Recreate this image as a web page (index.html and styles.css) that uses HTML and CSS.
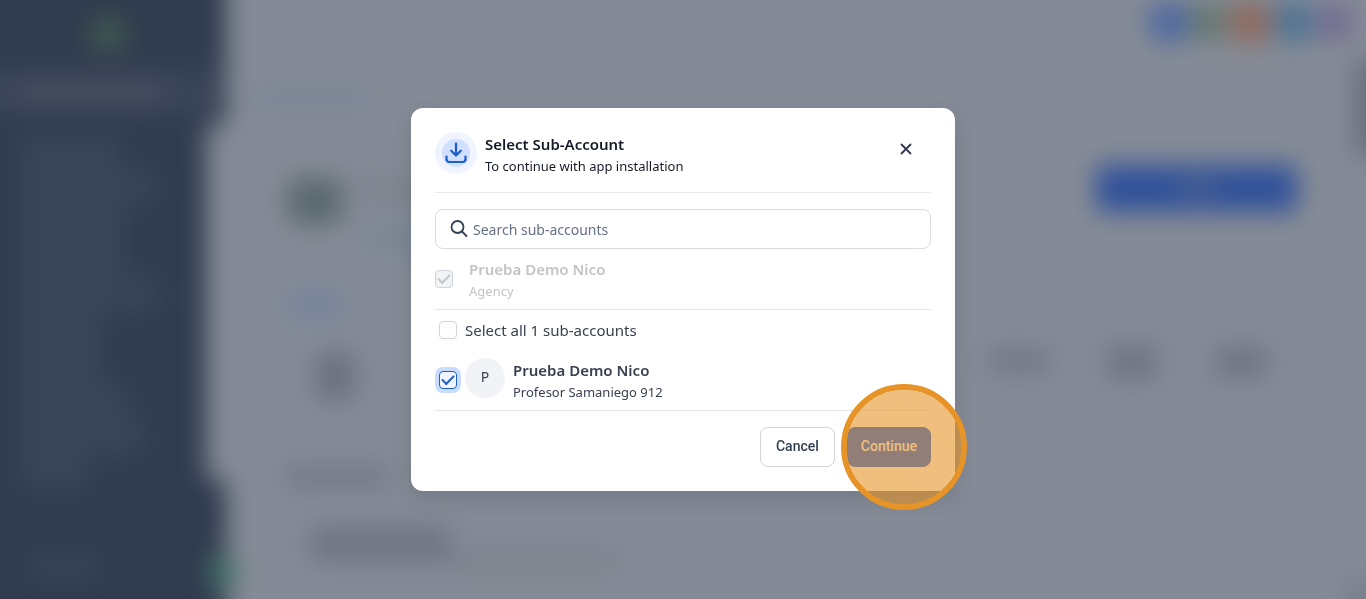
FILE: index.html
```html
<!DOCTYPE html>
<html lang="en">
<head>
<meta charset="utf-8">
<meta name="viewport" content="width=device-width, initial-scale=1">
<title>Select Sub-Account</title>
<link rel="stylesheet" href="styles.css">
</head>
<body>
<svg class="backdrop" viewBox="0 0 1366 599" preserveAspectRatio="none" aria-hidden="true">
  <defs>
    <filter id="soft" x="-60" y="-60" width="1500" height="720" filterUnits="userSpaceOnUse" color-interpolation-filters="sRGB"><feGaussianBlur stdDeviation="13"/></filter>
  </defs>
  <rect width="1366" height="599" fill="#858b96"/>
  <g filter="url(#soft)">
    <rect x="-60" y="-60" width="1500" height="720" fill="#858b96"/>
    <path d="M-60-60H226V125H206V480H226V660H-60Z" fill="#303b4e"/>
    <rect x="-60" y="70" width="282" height="44" fill="#3b4558"/>
    <rect x="18" y="82" width="145" height="20" fill="#494f61"/>
    <circle cx="108" cy="34" r="20" fill="#3f5650"/>
    <g fill="#3a4558">
      <rect x="20" y="134" width="100" height="34"/>
      <rect x="20" y="168" width="135" height="36"/>
      <rect x="20" y="204" width="105" height="72"/>
      <rect x="20" y="276" width="140" height="36"/>
      <rect x="20" y="312" width="82" height="72"/>
      <rect x="20" y="384" width="110" height="36"/>
      <rect x="20" y="420" width="125" height="36"/>
      <rect x="20" y="456" width="70" height="34"/>
      <rect x="30" y="554" width="68" height="24"/>
    </g>
    <circle cx="222" cy="572" r="16" fill="#417066"/>
    <rect x="255" y="88" width="115" height="20" fill="#7a8497"/>
    <rect x="288" y="178" width="54" height="46" fill="#5a686f"/>
    <rect x="355" y="180" width="120" height="20" fill="#7c818c"/>
    <rect x="365" y="225" width="100" height="28" fill="#788693"/>
    <rect x="285" y="288" width="60" height="34" fill="#78849b"/>
    <rect x="316" y="352" width="38" height="48" fill="#6b707c"/>
    <rect x="285" y="466" width="105" height="22" fill="#747985"/>
    <rect x="310" y="526" width="140" height="36" fill="#6e7481"/>
    <rect x="450" y="552" width="170" height="18" fill="#7b818b"/>
    <circle cx="1169" cy="22" r="22" fill="#5069a0"/>
    <circle cx="1208" cy="22" r="19" fill="#62766f"/>
    <circle cx="1250" cy="22" r="22" fill="#8f6a5e"/>
    <circle cx="1294" cy="22" r="22" fill="#507494"/>
    <circle cx="1335" cy="22" r="19" fill="#746b91"/>
    <rect x="1096" y="165" width="201" height="47" rx="5" fill="#305199"/>
    <rect x="1180" y="180" width="36" height="16" fill="#4a608f"/>
    <rect x="1355" y="60" width="40" height="95" fill="#696f7a"/>
    <rect x="988" y="348" width="62" height="26" fill="#737886"/>
    <rect x="1106" y="344" width="52" height="36" fill="#6f7583"/>
    <rect x="1214" y="346" width="54" height="32" fill="#6f7583"/>
    <circle cx="1366" cy="599" r="24" fill="#7a808b"/>
  </g>
</svg>
<main class="overlay">
  <form class="modal" role="dialog" aria-labelledby="title" aria-describedby="subtitle">
    <header class="modal-header">
      <span class="badge">
        <svg width="24" height="24" viewBox="0 0 24 24" fill="none" stroke="#1d5bcc" stroke-width="2.200" stroke-linecap="round" stroke-linejoin="round" aria-hidden="true"><path d="M12 2.500v12M7.200 9.700l4.800 4.800 4.800-4.800M2.500 15.500V18a3 3 0 0 0 3 3h13a3 3 0 0 0 3-3v-2.500"/></svg>
      </span>
      <div class="text">
        <h1 class="name title" id="title">Select Sub-Account</h1>
        <p class="detail title" id="subtitle">To continue with app installation</p>
      </div>
      <button class="close" type="button" aria-label="Close">
        <svg width="12" height="12" viewBox="0 0 12 12" fill="none" stroke="#30374a" stroke-width="1.800" stroke-linecap="round" aria-hidden="true"><path d="m1.500 1.500 9 9m0-9-9 9"/></svg>
      </button>
    </header>
    <div class="search">
      <svg width="20" height="20" viewBox="0 0 20 20" fill="none" stroke="#344054" stroke-width="1.800" stroke-linecap="round" aria-hidden="true"><circle cx="7.500" cy="8" r="6"/><path d="m12 12.500 4.500 4.500"/></svg>
      <input class="search-input" type="search" placeholder="Search sub-accounts" aria-label="Search sub-accounts">
    </div>
    <label class="row agency">
      <input class="check" type="checkbox" checked disabled>
      <span class="text"><span class="name">Prueba Demo Nico</span><span class="detail">Agency</span></span>
    </label>
    <label class="select-all">
      <input class="check" type="checkbox">
      <span>Select all 1 sub-accounts</span>
    </label>
    <label class="row account">
      <input class="check focused" type="checkbox" checked>
      <span class="avatar">P</span>
      <span class="text"><span class="name">Prueba Demo Nico</span><span class="detail">Profesor Samaniego 912</span></span>
    </label>
    <footer class="actions">
      <button class="button" type="button">Cancel</button>
      <div class="target">
        <button class="button primary" type="submit">Continue</button>
        <span class="highlight"></span>
      </div>
    </footer>
  </form>
</main>
</body>
</html>
```
FILE: styles.css
```css
* { box-sizing: border-box; }

body {
  margin: 0;
  background: #858b96;
  color: #394150;
  font-family: "Noto Sans", "Open Sans", sans-serif;
  font-size: 15px;
  line-height: 24px;
}

.backdrop {
  position: fixed;
  inset: 0;
  width: 100%;
  height: 100%;
}

.overlay {
  position: relative;
  display: flex;
  align-items: center;
  justify-content: center;
  min-height: 100vh;
  padding: 16px;
}

.modal {
  width: 100%;
  max-width: 544px;
  padding: 24px;
  border-radius: 12px;
  background: #fff;
  box-shadow: 0 8px 20px rgba(16, 24, 40, 0.15);
}

.modal-header {
  display: flex;
  align-items: flex-start;
  gap: 8px;
  padding-bottom: 16px;
  border-bottom: 1px solid #e4e7ec;
}

.badge {
  display: grid;
  place-items: center;
  width: 42px;
  height: 42px;
  border: 7px solid #eff4ff;
  border-radius: 50%;
  background: #d1e0ff;
}

.badge svg { flex: none; }

.text {
  display: flex;
  flex: 1;
  flex-direction: column;
}

.name {
  margin: 0;
  font-size: 15px;
  font-weight: 600;
  line-height: 24px;
}

.detail {
  margin: 0;
  font-size: 13px;
  line-height: 20px;
}

.title { color: #151b29; }

.close {
  display: grid;
  place-items: center;
  width: 34px;
  height: 34px;
  margin-right: 8px;
  padding: 0;
  border: 0;
  background: none;
}

.search {
  display: flex;
  align-items: center;
  gap: 3px;
  height: 40px;
  margin-top: 16px;
  padding: 0 14px;
  border: 1px solid #d9dce2;
  border-radius: 8px;
}

.search-input {
  flex: 1;
  min-width: 0;
  padding: 0;
  border: 0;
  outline: 0;
  background: none;
  color: inherit;
  font-family: inherit;
  font-size: 14px;
}

.search-input::placeholder { color: #667085; }

.row {
  display: flex;
  align-items: center;
  padding: 8px 0;
  border-bottom: 1px solid #e4e7ec;
}

.agency {
  gap: 16px;
  color: #c3c4c7;
}

.select-all {
  display: flex;
  align-items: center;
  gap: 8px;
  padding: 8px 4px;
}

.account {
  gap: 8px;
  padding-left: 4px;
}

.check {
  appearance: none;
  flex: none;
  display: grid;
  place-items: center;
  width: 18px;
  height: 18px;
  margin: 0;
  border: 1px solid #cfd3da;
  border-radius: 4px;
  background: #fff;
}

.check:checked::before {
  content: "";
  width: 10px;
  height: 5px;
  margin-bottom: 4px;
  border: solid #2360c4;
  border-width: 0 0 2px 2px;
  transform: rotate(-45deg);
}

.check:disabled { background: #f2f4f7; }

.check:disabled::before { border-color: #c3c7ce; }

.focused {
  border-color: #2360c4;
  background: #eff4ff;
  box-shadow: 0 0 0 4px #c8dcff;
}

.avatar {
  display: grid;
  place-items: center;
  align-self: flex-start;
  width: 40px;
  height: 40px;
  padding-bottom: 2px;
  border-radius: 50%;
  background: #f2f3f7;
  font-size: 14px;
}

.actions {
  display: flex;
  justify-content: flex-end;
  gap: 12px;
  padding-top: 16px;
}

.button {
  height: 40px;
  padding: 0 15px 2px;
  border: 1px solid #d0d5dd;
  border-radius: 8px;
  background: #fff;
  color: #344054;
  font: 500 14px Roboto, sans-serif;
}

.primary {
  padding: 0 13px 2px;
  border-color: #155eef;
  background: #155eef;
  color: #fff;
}

.target { position: relative; }

.highlight {
  position: absolute;
  top: -43px;
  right: -36px;
  width: 126px;
  height: 126px;
  border: 6px solid #e69428;
  border-radius: 50%;
  background: rgba(230, 148, 40, 0.6);
  background-clip: padding-box;
  pointer-events: none;
}
```
